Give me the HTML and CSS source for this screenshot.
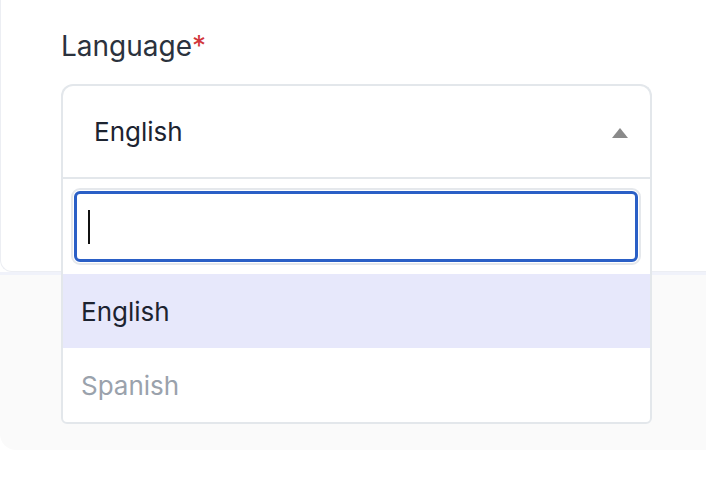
FILE: index.html
```html
<!DOCTYPE html>
<html lang="en">
<head>
<meta charset="utf-8">
<title>Language</title>
<link rel="stylesheet" href="styles.css">
</head>
<body>
<div class="page">
  <section class="card">
    <div class="field">
      <label class="label">Language<span class="req">*</span></label>
      <div class="select">
        <div class="select-head">
          <span class="select-value">English</span>
          <svg class="arrow" width="16" height="10" viewBox="0 0 16 10"><path d="M0 10 L8 0 L16 10 Z" fill="#8a8a8a"/></svg>
        </div>
        <div class="dropdown">
          <div class="search">
            <div class="search-ring">
              <div class="search-input"><span class="caret"></span></div>
            </div>
          </div>
          <ul class="options">
            <li class="option active">English</li>
            <li class="option muted">Spanish</li>
          </ul>
        </div>
      </div>
    </div>
  </section>
  <section class="footer"></section>
</div>
</body>
</html>
```
FILE: styles.css
```css
* { box-sizing: border-box; }
html, body { margin: 0; padding: 0; background: #ffffff; }
body { font-family: Inter, "Open Sans", sans-serif; width: 706px; height: 488px; overflow: hidden; }
.page { width: 706px; }
.card {
  height: 272px;
  background: #ffffff;
  border-left: 1px solid #eceef3;
  border-bottom: 1px solid #eceef3;
  border-bottom-left-radius: 12px;
}
.field { padding: 29px 0 0 60px; }
.label {
  display: block;
  font-size: 28px;
  line-height: 34px;
  color: #2b323d;
  margin-bottom: 21px;
}
.req { color: #d2363c; }
.select { position: relative; width: 591px; }
.select-head {
  height: 93px;
  border: 2px solid #e3e7eb;
  border-bottom: none;
  border-radius: 12px 12px 0 0;
  display: flex;
  align-items: center;
  justify-content: space-between;
  padding: 0 22px 0 31px;
  background: #ffffff;
}
.select-value { font-size: 26px; color: #1c2330; }
.arrow { display: block; margin-top: 2px; }
.dropdown {
  position: absolute;
  left: 0;
  top: 100%;
  width: 591px;
  background: #ffffff;
  border: 2px solid #e3e7eb;
  border-radius: 0 0 6px 6px;
  z-index: 2;
}
.search { padding: 9px 9px 9px 8px; }
.search-ring {
  border: 2px solid #e5e8ec;
  border-radius: 9px;
  padding: 1px;
}
.search-input {
  height: 71px;
  border: 3px solid #2a5fc6;
  border-radius: 6px;
  display: flex;
  align-items: center;
  padding-left: 11px;
}
.caret { display: block; width: 2px; height: 34px; background: #111111; }
.options { list-style: none; margin: 0; padding: 0; }
.option {
  height: 74px;
  display: flex;
  align-items: center;
  padding-left: 18px;
  font-size: 26px;
  color: #1c2330;
}
.option.active { background: #e7e8fb; }
.option.muted { color: #9aa2ac; }
.footer {
  height: 178px;
  background: #fafafa;
  border-top: 3px solid #f0f2fa;
  border-bottom-left-radius: 16px;
}
```
